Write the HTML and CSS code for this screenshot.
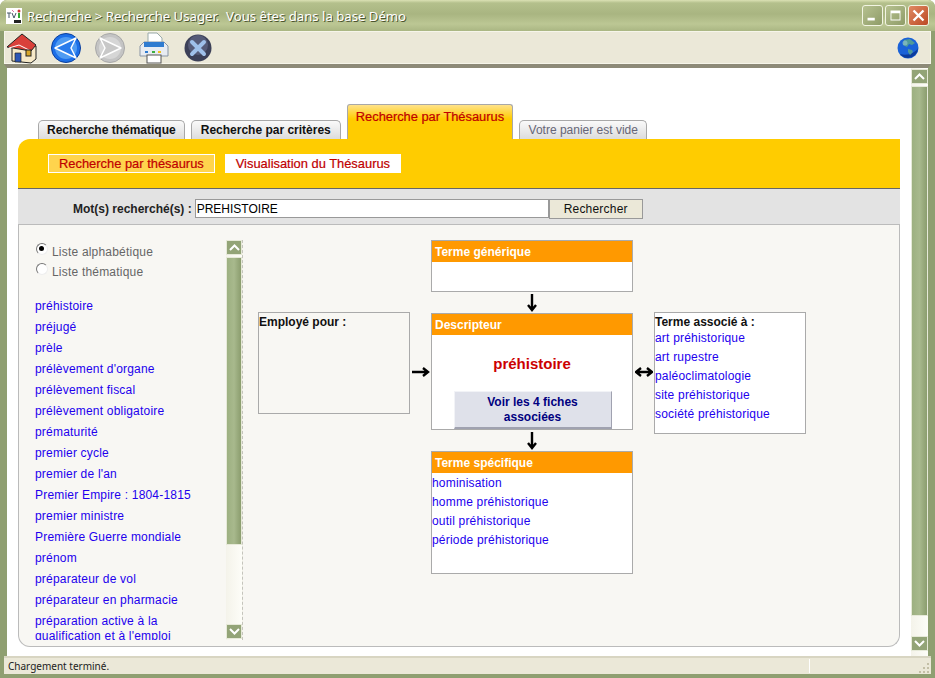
FILE: index.html
```html
<!DOCTYPE html>
<html lang="fr">
<head>
  <meta charset="UTF-8">
  <link rel="stylesheet" href="styles.css">
  <title>Recherche Usager</title>
</head>
<body>
<div class="window">

  <div class="titlebar">
    <svg class="app-icon" width="16" height="16" viewBox="0 0 16 16">
      <rect width="16" height="16" fill="#fff"/>
      <path d="M1 5h4M3 5v5M6 5l2 5 2-5" fill="none" stroke="#456" stroke-width="1"/>
      <path d="M6 2l2 2" stroke="#d7a" stroke-width="1"/>
      <circle cx="13" cy="3" r="1.5" fill="#c33"/>
      <rect x="12" y="5" width="2" height="5" fill="#3a3"/>
      <rect x="8" y="12" width="7" height="3" fill="#222"/>
    </svg>
    <span class="title-text">Recherche &gt; Recherche Usager.&nbsp; Vous êtes dans la base Démo</span>
    <div class="win-buttons">
      <span class="win-btn"><svg width="21" height="21" viewBox="0 0 21 21"><rect x="5" y="13" width="8" height="3" fill="#fff"/></svg></span>
      <span class="win-btn"><svg width="21" height="21" viewBox="0 0 21 21"><path d="M5 5h11v11H5z M6 8v7h9V8z" fill="#fff" fill-rule="evenodd"/></svg></span>
      <span class="win-btn win-close"><svg width="21" height="21" viewBox="0 0 21 21"><path d="M5 5l11 11M16 5L5 16" stroke="#fff" stroke-width="2.6" fill="none"/></svg></span>
    </div>
  </div>

  <div class="toolbar">
    <svg class="tool" width="32" height="32" viewBox="0 0 32 32">
      <path d="M6 15l0 14 19 2 5-4 0-13z" fill="#f6e9c8" stroke="#222"/>
      <path d="M1 15L16 2l14 11-5 6z" fill="#d9403a" stroke="#222"/>
      <path d="M3 16L13 13l12 6" fill="none" stroke="#fff" stroke-width="1"/>
      <path d="M9 21h6v9H9z" fill="#2c55b5" stroke="#222" stroke-width=".7"/>
      <rect x="20" y="18" width="5" height="6" fill="#d8a72a" stroke="#222"/>
    </svg>
    <svg class="tool tool-gap" width="32" height="32" viewBox="0 0 32 32">
      <circle cx="16" cy="16" r="14.5" fill="#1c6fe8" stroke="#0c3f9c"/>
      <circle cx="16" cy="16" r="11" fill="#4f9bf2"/>
      <path d="M5 16L26 6 21 16l5 10z" fill="#2a7cec" stroke="#fff" stroke-width="1.5" stroke-linejoin="round"/>
    </svg>
    <svg class="tool tool-gap" width="32" height="32" viewBox="0 0 32 32">
      <circle cx="16" cy="16" r="14.5" fill="#c4c4c4" stroke="#a8a8a8"/>
      <circle cx="16" cy="16" r="11" fill="#d6d6d6"/>
      <path d="M27 16L6 6l5 10-5 10z" fill="#c8c8c8" stroke="#fff" stroke-width="1.5" stroke-linejoin="round"/>
    </svg>
    <svg class="tool tool-gap" width="32" height="32" viewBox="0 0 32 32">
      <path d="M10 1h9l5 5v8H10z" fill="#fff" stroke="#9aa"/>
      <path d="M2 14l4-4h20l4 4v10H2z" fill="#e8ecf2" stroke="#8895a5"/>
      <rect x="6" y="10" width="20" height="5" fill="#2f7bd0"/>
      <rect x="7" y="19" width="3" height="2" fill="#2f7bd0"/>
      <rect x="14" y="19" width="3" height="2" fill="#3db040"/>
      <rect x="20" y="19" width="3" height="2" fill="#f0c020"/>
      <rect x="9" y="23" width="14" height="8" fill="#fff" stroke="#555"/>
    </svg>
    <svg class="tool tool-gap-wide" width="28" height="28" viewBox="0 0 28 28">
      <circle cx="14" cy="14" r="13.5" fill="#3c4058"/>
      <circle cx="14" cy="11" r="10" fill="#565b78"/>
      <path d="M8 8l12 12M20 8L8 20" stroke="#9fc0ea" stroke-width="4" stroke-linecap="round"/>
    </svg>
    <svg class="globe" width="22" height="22" viewBox="0 0 22 22">
      <circle cx="11" cy="11" r="10.5" fill="#1a62d8"/>
      <path d="M21 11a10 10 0 0 1-10 10 10 10 0 0 1-8-4c8 2 15-1 18-6z" fill="#0c3c9c"/>
      <path d="M7 3l6-1 5 4-3 2-3-1-2 3-4-2zM11 12l4 1 1 2-3 3-2-3z" fill="#4f9a9a"/>
      <circle cx="8" cy="6" r="2.5" fill="#8fc0c8" opacity=".7"/>
    </svg>
  </div>

  <div class="frame">
    <div class="page">
      <div class="tabs">
        <a class="tab">Recherche thématique</a>
        <a class="tab tab-wide">Recherche par critères</a>
        <a class="tab tab-active">Recherche par Thésaurus</a>
        <a class="tab tab-muted">Votre panier est vide</a>
      </div>

      <div class="panel">
        <div class="subtabs">
          <a class="subtab subtab-active">Recherche par thésaurus</a>
          <a class="subtab">Visualisation du Thésaurus</a>
        </div>

        <div class="search-row">
          <label class="search-label">Mot(s) recherché(s) :</label>
          <input class="search-input" type="text" value="PREHISTOIRE">
          <button class="search-btn">Rechercher</button>
        </div>

        <div class="panel-body">
          <div class="side">
            <div class="radio-line"><span class="radio radio-on"></span>Liste alphabétique</div>
            <div class="radio-line"><span class="radio"></span>Liste thématique</div>
            <ul class="term-list">
              <li><a>préhistoire</a></li>
              <li><a>préjugé</a></li>
              <li><a>prèle</a></li>
              <li><a>prélèvement d'organe</a></li>
              <li><a>prélèvement fiscal</a></li>
              <li><a>prélèvement obligatoire</a></li>
              <li><a>prématurité</a></li>
              <li><a>premier cycle</a></li>
              <li><a>premier de l'an</a></li>
              <li><a>Premier Empire : 1804-1815</a></li>
              <li><a>premier ministre</a></li>
              <li><a>Première Guerre mondiale</a></li>
              <li><a>prénom</a></li>
              <li><a>préparateur de vol</a></li>
              <li><a>préparateur en pharmacie</a></li>
              <li><a>préparation active à la qualification et à l'emploi</a></li>
            </ul>
          </div>

          <div class="scrollbar scrollbar-list">
            <span class="sb-btn"><svg width="11" height="7" viewBox="0 0 11 7"><path d="M1 6l4.5-4.5L10 6" fill="none" stroke="#fff" stroke-width="2"/></svg></span>
            <span class="sb-thumb"></span>
            <span class="sb-btn"><svg width="11" height="7" viewBox="0 0 11 7"><path d="M1 1l4.5 4.5L10 1" fill="none" stroke="#fff" stroke-width="2"/></svg></span>
          </div>

          <div class="graph">
            <div class="box box-generic">
              <div class="box-head">Terme générique</div>
            </div>

            <div class="arrow arrow-a">
              <svg width="14" height="18" viewBox="0 0 14 18"><path d="M7 0v16M3 11l4 5 4-5" fill="none" stroke="#000" stroke-width="2.4"/></svg>
            </div>

            <div class="box box-side box-left"><b class="side-title">Employé pour :</b></div>

            <div class="arrow arrow-b">
              <svg width="18" height="14" viewBox="0 0 18 14"><path d="M0 7h16M11 3l5 4-5 4" fill="none" stroke="#000" stroke-width="2.4"/></svg>
            </div>

            <div class="box box-main">
              <div class="box-head">Descripteur</div>
              <div class="main-term">préhistoire</div>
              <a class="fiches-btn">Voir les 4 fiches associées</a>
            </div>

            <div class="arrow arrow-c">
              <svg width="18" height="14" viewBox="0 0 18 14"><path d="M1 7h16M6 3L1 7l5 4M12 3l5 4-5 4" fill="none" stroke="#000" stroke-width="2.4"/></svg>
            </div>

            <div class="box box-side box-right">
              <b class="side-title">Terme associé à :</b>
              <a class="term">art préhistorique</a>
              <a class="term">art rupestre</a>
              <a class="term">paléoclimatologie</a>
              <a class="term">site préhistorique</a>
              <a class="term">société préhistorique</a>
            </div>

            <div class="arrow arrow-d">
              <svg width="14" height="18" viewBox="0 0 14 18"><path d="M7 0v16M3 11l4 5 4-5" fill="none" stroke="#000" stroke-width="2.4"/></svg>
            </div>

            <div class="box box-specific">
              <div class="box-head">Terme spécifique</div>
              <a class="term">hominisation</a>
              <a class="term">homme préhistorique</a>
              <a class="term">outil préhistorique</a>
              <a class="term">période préhistorique</a>
            </div>
          </div>
        </div>
      </div>
    </div>

    <div class="scrollbar scrollbar-page">
      <span class="sb-btn"><svg width="11" height="7" viewBox="0 0 11 7"><path d="M1 6l4.5-4.5L10 6" fill="none" stroke="#fff" stroke-width="2"/></svg></span>
      <span class="sb-thumb"></span>
      <span class="sb-btn"><svg width="11" height="7" viewBox="0 0 11 7"><path d="M1 1l4.5 4.5L10 1" fill="none" stroke="#fff" stroke-width="2"/></svg></span>
    </div>
  </div>

  <div class="statusbar">
    <span class="status-text">Chargement terminé.</span>
    <span class="status-cell"></span>
    <svg class="grip" width="12" height="12" viewBox="0 0 12 12">
      <path d="M9 1h2v2H9zM5 5h2v2H5zM9 5h2v2H9zM1 9h2v2H1zM5 9h2v2H5zM9 9h2v2H9z" fill="#c3bfa6"/>
    </svg>
  </div>
</div>
</body>
</html>
```

FILE: styles.css
```css
* {
  box-sizing: border-box;
}

html, body {
  margin: 0;
  height: 100%;
  overflow: hidden;
}

body {
  font-family: "Liberation Sans", Arial, sans-serif;
  font-size: 12px;
  color: #000;
}

a {
  cursor: pointer;
}

.window {
  width: 935px;
  height: 678px;
  display: flex;
  flex-direction: column;
  background-color: #8f9f71;
  border: 4px solid #8f9f71;
  border-width: 0 4px 4px 4px;
  border-radius: 7px 7px 0 0;
}

/* title bar */
.titlebar {
  height: 31px;
  margin: 0 -4px;
  padding: 0 6px 0 6px;
  display: flex;
  align-items: center;
  background: linear-gradient(#dbe1b4 0, #b4c08c 3px, #a9b581 14px, #bcc794 24px, #aab683 100%);
  border-radius: 7px 7px 0 0;
}

.app-icon {
  margin-right: 5px;
}

.title-text {
  font-family: "Noto Sans", sans-serif;
  font-size: 13.15px;
  color: #fff;
  text-shadow: 1px 1px 0 #4c5530;
  white-space: pre;
}

.win-buttons {
  margin-left: auto;
  display: flex;
  gap: 2px;
}

.win-btn {
  width: 21px;
  height: 21px;
  border: 1px solid #f2f4e2;
  border-radius: 3px;
  background: linear-gradient(135deg, #b6c190, #8f9c68);
  display: flex;
  align-items: center;
  justify-content: center;
}

.win-close {
  background: linear-gradient(135deg, #e08a64, #bc4a24);
}

/* toolbar */
.toolbar {
  height: 33px;
  flex: none;
  display: flex;
  align-items: center;
  padding-left: 1px;
  background-color: #ebe8d8;
  border: 1px solid #f6f5ea;
}

.tool-gap {
  margin-left: 12px;
}

.tool-gap-wide {
  margin-left: 14px;
}

.globe {
  margin-left: auto;
  margin-right: 11px;
}

/* main frame */
.frame {
  flex: 1;
  min-height: 0;
  display: flex;
  background-color: #fff;
  border-top: 4px solid #8d8a78;
  border-left: 3px solid #8f9f71;
  border-right: 3px solid #8f9f71;
}

.page {
  flex: 1;
  min-width: 0;
  padding: 36px 11px 9px 11px;
  display: flex;
  flex-direction: column;
  background-color: #fff;
}

.tabs {
  height: 35px;
  flex: none;
  display: flex;
  align-items: flex-end;
  padding-left: 20px;
  gap: 6px;
}

.tab {
  height: 19px;
  padding: 0 8px;
  display: flex;
  align-items: center;
  font-weight: bold;
  font-size: 12px;
  color: #111;
  background: linear-gradient(#fafafa, #dcdcdc);
  border: 1px solid #a8a8a8;
  border-bottom: 0;
  border-radius: 5px 5px 0 0;
}

.tab-wide {
  padding: 0 9px;
}

.tab-active {
  height: 35px;
  padding: 0 8px 12px;
  font-size: 12.85px;
  font-weight: normal;
  color: #c00000;
  background: linear-gradient(#ffe28a, #ffcc00 14px);
  border-radius: 3px 3px 0 0;
  -webkit-text-stroke: .2px #c00000;
}

.tab-muted {
  padding: 0 8.5px;
  font-weight: normal;
  color: #666677;
}

.panel {
  flex: 1;
  min-height: 0;
  display: flex;
  flex-direction: column;
}

.subtabs {
  height: 50px;
  flex: none;
  display: flex;
  padding: 15px 0 0 30px;
  gap: 10px;
  align-items: flex-start;
  background-color: #ffcc00;
  border-radius: 12px 0 0 0;
  border-bottom: 1px solid #666;
}

.subtab {
  height: 19px;
  padding: 0 11px;
  display: flex;
  align-items: center;
  font-size: 12.9px;
  color: #c00000;
  background-color: #fff;
  -webkit-text-stroke: .2px #c00000;
}

.subtab-active {
  padding: 0 10px;
  background-color: #ffd44d;
  border: 1px solid #fff;
}

.search-row {
  height: 36px;
  flex: none;
  display: flex;
  align-items: center;
  padding: 4px 0 0 55px;
  background-color: #e3e3e3;
  border-bottom: 1px solid #bbb;
}

.search-label {
  font-weight: bold;
  color: #222;
  margin-right: 3px;
}

.search-input {
  width: 354px;
  height: 19px;
  padding: 0 1px;
  font: 12px "Liberation Sans", Arial, sans-serif;
  color: #000;
  background: #fff;
  border: 1px solid #999;
}

.search-btn {
  width: 94px;
  height: 20px;
  padding: 0;
  font: 12px "Liberation Sans", Arial, sans-serif;
  letter-spacing: .2px;
  color: #111;
  background-color: #ebe8d8;
  border: 1px solid #999;
}

.panel-body {
  flex: 1;
  min-height: 0;
  display: flex;
  background-color: #f8f7f3;
  border: 1px solid #bbb;
  border-top: 0;
  border-radius: 0 0 12px 12px;
}

/* left column */
.side {
  width: 207px;
  flex: none;
  padding: 17px 0 6px 16px;
  overflow: hidden;
  display: flex;
  flex-direction: column;
}

.radio-line {
  height: 20px;
  display: flex;
  align-items: center;
  color: #666;
  letter-spacing: .2px;
}

.radio {
  width: 12px;
  height: 12px;
  margin: -6px 4px 0 1px;
  border: 1px solid;
  border-color: #777 #eee #eee #777;
  border-radius: 50%;
  background-color: #fff;
  position: relative;
}

.radio-on::after {
  content: "";
  position: absolute;
  left: 2px;
  top: 2px;
  width: 5px;
  height: 5px;
  border-radius: 50%;
  background-color: #000;
}

.term-list {
  list-style: none;
  margin: 17px 0 0;
  padding: 0;
  flex: 1;
  min-height: 0;
  overflow: hidden;
}

.term-list li {
  margin-bottom: 6px;
  line-height: 15px;
}

.term-list a, .term {
  color: #2200ee;
  letter-spacing: .2px;
}

/* scrollbars */
.scrollbar {
  width: 16px;
  flex: none;
  display: flex;
  flex-direction: column;
  gap: 2px;
  background: linear-gradient(90deg, #f4f3ea, #fdfdf8);
}

.scrollbar-list {
  margin: 15px 0 6px;
  width: 17px;
  border-right: 1px dashed #c4c4bc;
}

.scrollbar-page {
  padding: 1px 0;
  width: 17px;
}

.sb-btn {
  height: 15px;
  flex: none;
  display: flex;
  align-items: center;
  justify-content: center;
  background-color: #93a477;
  border: 1px solid #e6e9d8;
}

.sb-thumb {
  flex: none;
  background: linear-gradient(90deg, #9db081, #a8b98d 50%, #8b9d6e);
  border: 1px solid #e6e9d8;
}

.scrollbar-list .sb-thumb {
  height: 288px;
  margin-bottom: 77px;
}

.scrollbar-page .sb-thumb {
  height: 530px;
  margin-bottom: 18px;
}

/* diagram */
.graph {
  flex: none;
  margin: 15px 0 0 15px;
  display: grid;
  grid-template-columns: 152px 21px 202px 21px 152px;
  grid-template-rows: 52px 21px 117px 21px 123px;
  align-self: flex-start;
}

.box {
  background-color: #fff;
  border: 1px solid #aaa;
}

.box-head {
  height: 21px;
  padding: 0 3px;
  display: flex;
  align-items: center;
  font-weight: bold;
  color: #fff;
  background-color: #ff9900;
}

.box-generic {
  grid-area: 1 / 3;
}

.box-main {
  grid-area: 3 / 3;
  display: flex;
  flex-direction: column;
  align-items: center;
}

.box-main .box-head {
  align-self: stretch;
}

.box-specific {
  grid-area: 5 / 3;
}

.box-specific .box-head {
  margin-bottom: 1px;
}

.box-side {
  align-self: start;
  margin-top: -1px;
  padding: 2px 0 0 0;
  background-color: #f8f7f3;
}

.box-left {
  grid-area: 3 / 1;
  height: 102px;
}

.box-right {
  grid-area: 3 / 5;
  height: 122px;
  background-color: #fff;
}

.box-right .side-title {
  margin-bottom: -1px;
}

.side-title {
  display: block;
  height: 15px;
  line-height: 15px;
  color: #111;
}

.term {
  display: block;
  height: 19px;
  line-height: 19px;
}

.arrow {
  display: flex;
  align-items: center;
  justify-content: center;
}

.arrow-a {
  grid-area: 2 / 3;
}

.arrow-b {
  grid-area: 3 / 2;
}

.arrow-c {
  grid-area: 3 / 4;
}

.arrow-d {
  grid-area: 4 / 3;
}

.main-term {
  margin-top: 20px;
  font-size: 15px;
  font-weight: bold;
  color: #cc0000;
}

.fiches-btn {
  width: 158px;
  height: 38px;
  margin: auto 0 0 1px;
  padding: 3px 20px 0;
  text-align: center;
  font-weight: bold;
  line-height: 15px;
  color: #000080;
  background-color: #dfe1ea;
  border-right: 1px solid #a0a2b0;
  border-bottom: 2px solid #a0a2b0;
  border-top: 1px solid #f2f3f7;
  border-left: 1px solid #f2f3f7;
}

/* status bar */
.statusbar {
  height: 18px;
  flex: none;
  display: flex;
  align-items: center;
  padding-left: 4px;
  background-color: #ebe8d8;
  border-top: 2px solid #d8d5c2;
  font-family: "Noto Sans", sans-serif;
  font-size: 10px;
  color: #222;
}

.status-cell {
  margin-left: auto;
  width: 109px;
  height: 14px;
  border-left: 1px solid #fff;
}

.grip {
  margin-right: 1px;
  align-self: flex-end;
}
```
